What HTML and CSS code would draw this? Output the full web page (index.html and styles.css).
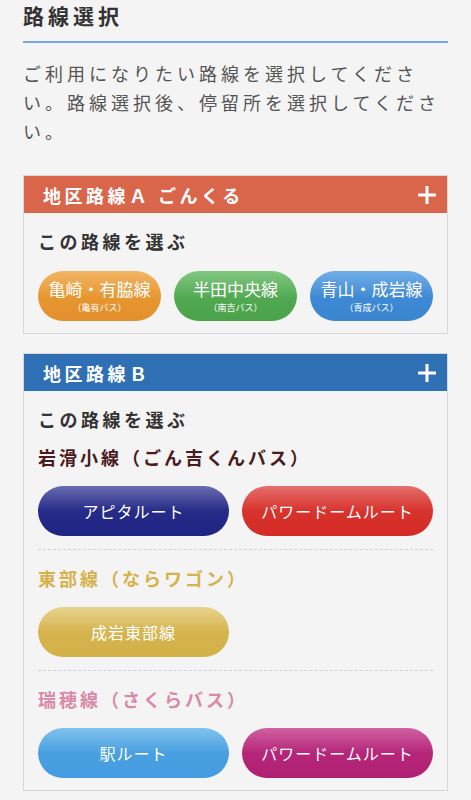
FILE: index.html
```html
<!DOCTYPE html>
<html lang="ja">
  <head>
    <meta charset="UTF-8" />
    <meta name="viewport" content="width=device-width, initial-scale=1.0" />
    <title>路線選択</title>
    <link rel="stylesheet" href="styles.css">
  </head>
  <body>
    <div class="main-content">
      <h1 class="page-title">路線選択</h1>
      <p class="lead">ご利用になりたい路線を選択してください。路線選択後、停留所を選択してください。</p>

      <!-- 地区路線A -->
      <div class="route-card">
        <div class="card-header header-red">
          <span>地区路線Ａ ごんくる</span>
          <svg class="plus" width="20" height="20" viewBox="0 0 20 20">
            <path d="M10 1v18M1 10h18" stroke="#fff" stroke-width="3" fill="none" />
          </svg>
        </div>
        <div class="card-body">
          <h3 class="choose">この路線を選ぶ</h3>
          <div class="btn-row three spaced">
            <a class="route-btn btn-orange"><span class="btn-main">亀崎・有脇線</span><small>（亀有バス）</small></a>
            <a class="route-btn btn-green"><span class="btn-main">半田中央線</span><small>（南吉バス）</small></a>
            <a class="route-btn btn-blue"><span class="btn-main">青山・成岩線</span><small>（青成バス）</small></a>
          </div>
        </div>
      </div>

      <!-- 地区路線B -->
      <div class="route-card">
        <div class="card-header header-blue">
          <span>地区路線Ｂ</span>
          <svg class="plus" width="20" height="20" viewBox="0 0 20 20">
            <path d="M10 1v18M1 10h18" stroke="#fff" stroke-width="3" fill="none" />
          </svg>
        </div>
        <div class="card-body">
          <h3 class="choose">この路線を選ぶ</h3>

          <div class="line-group">
            <h4 class="line-name name-maroon">岩滑小線（ごん吉くんバス）</h4>
            <div class="btn-row two">
              <a class="route-btn btn-navy">アピタルート</a>
              <a class="route-btn btn-red">パワードームルート</a>
            </div>
          </div>

          <div class="line-group">
            <h4 class="line-name name-gold">東部線（ならワゴン）</h4>
            <div class="btn-row two">
              <a class="route-btn btn-gold">成岩東部線</a>
            </div>
          </div>

          <div class="line-group">
            <h4 class="line-name name-pink">瑞穂線（さくらバス）</h4>
            <div class="btn-row two">
              <a class="route-btn btn-sky">駅ルート</a>
              <a class="route-btn btn-magenta">パワードームルート</a>
            </div>
          </div>
        </div>
      </div>
    </div>
  </body>
</html>
```

FILE: styles.css
```css
body {
  font-family: "Noto Sans CJK JP", "Noto Sans", sans-serif;
  margin: 0;
  background-color: #f4f4f4;
  color: #333;
}
.main-content {
  padding: 0 23px 20px;
}
.page-title {
  margin: 0;
  font-size: 21px;
  line-height: 30px;
  letter-spacing: 4px;
  font-weight: bold;
  color: #333;
  padding-bottom: 11px;
  border-bottom: 2px solid #78a6e6;
}
.lead {
  margin: 16px 0 29px;
  font-size: 18px;
  line-height: 29px;
  letter-spacing: 4px;
  color: #555;
}
.route-card {
  border: 1px solid #d8d8d8;
  margin-bottom: 19px;
}
.card-header {
  height: 37px;
  display: flex;
  justify-content: space-between;
  align-items: center;
  padding: 0 10px 0 19px;
  color: white;
  font-size: 18px;
  font-weight: bold;
  letter-spacing: 3.5px;
}
.header-red {
  background-color: #d9654a;
}
.header-blue {
  background-color: #2f6fb4;
}
.plus {
  display: block;
}
.card-body {
  padding: 14px 14px 12px;
}
.choose {
  margin: 0 0 10px;
  font-size: 18px;
  line-height: 28px;
  letter-spacing: 3.5px;
  font-weight: bold;
  color: #333;
}
.line-name {
  margin: 0 0 15px;
  font-size: 18px;
  line-height: 28px;
  letter-spacing: 3px;
  font-weight: bold;
}
.name-maroon {
  color: #4b1a1c;
}
.name-gold {
  color: #d6b24c;
}
.name-pink {
  color: #d98aa8;
}
.line-group {
  padding: 14px 0 13px;
  border-top: 1px dashed #cfcfcf;
}
.line-group:first-of-type {
  padding-top: 0;
  border-top: none;
}
.line-group:last-child {
  padding-bottom: 0;
}
.btn-row {
  display: grid;
  gap: 13px;
}
.btn-row.three {
  grid-template-columns: repeat(3, 1fr);
}
.btn-row.two {
  grid-template-columns: repeat(2, 1fr);
}
.btn-row.spaced {
  margin-top: 16px;
}
.route-btn {
  height: 50px;
  border-radius: 25px;
  display: flex;
  flex-direction: column;
  justify-content: center;
  align-items: center;
  color: white;
  font-size: 16px;
  line-height: 20px;
  letter-spacing: 1px;
}
.btn-main {
  display: block;
  font-size: 17px;
  line-height: 20px;
  letter-spacing: 0;
}
.route-btn small {
  display: block;
  margin-top: 3px;
  font-size: 9px;
  line-height: 12px;
  letter-spacing: 0;
}
.btn-orange {
  background: linear-gradient(#f2b565, #e6962f 55%, #e38f2d);
}
.btn-green {
  background: linear-gradient(#82c782, #50a951 55%, #4aa24b);
}
.btn-blue {
  background: linear-gradient(#70aee8, #3e89d4 55%, #3a84d0);
}
.btn-navy {
  background: linear-gradient(#6a6db0, #262b88 50%, #1f2484);
}
.btn-red {
  background: linear-gradient(#e46f6c, #d8332d 50%, #d42a26);
}
.btn-gold {
  background: linear-gradient(#e8d38e, #d6b44e 50%, #d3b048);
}
.btn-sky {
  background: linear-gradient(#7fc2ee, #49a0e0 50%, #449ce0);
}
.btn-magenta {
  background: linear-gradient(#cf61a1, #b52679 50%, #b02072);
}
```
